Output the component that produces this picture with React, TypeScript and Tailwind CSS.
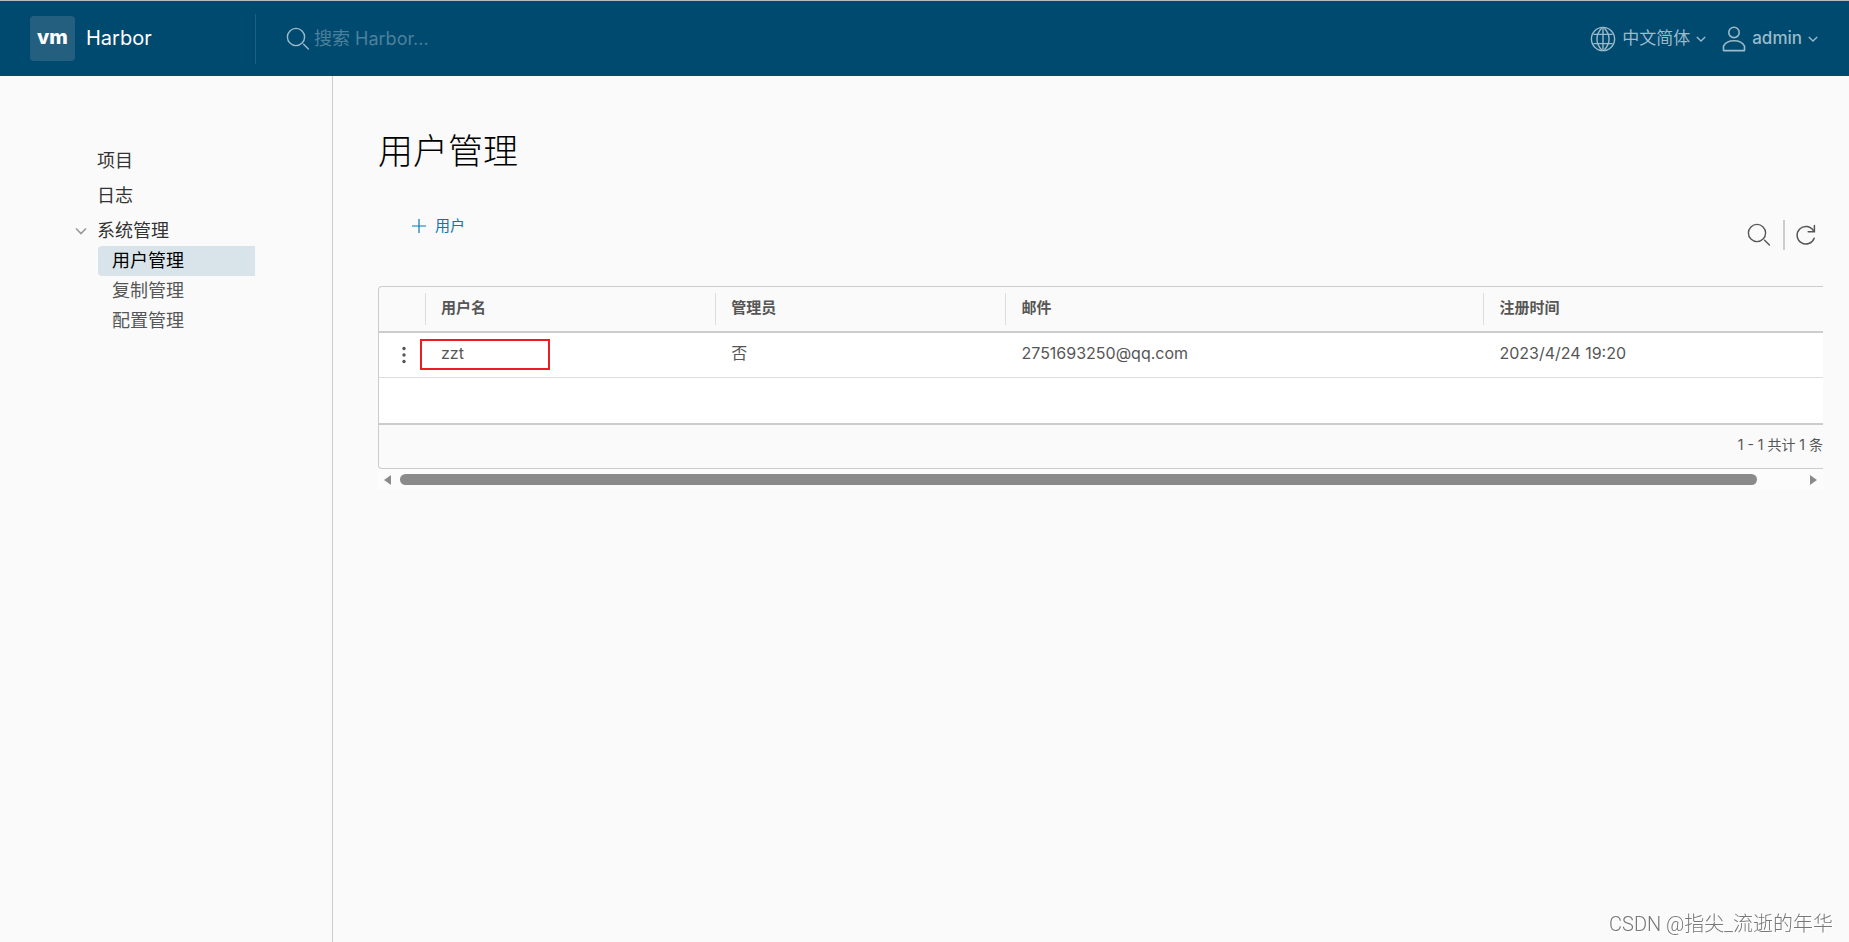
import React from "react";

interface User {
  name: string;
  admin: boolean;
  email: string;
  created: string;
}

const users: User[] = [
  { name: "zzt", admin: false, email: "2751693250@qq.com", created: "2023/4/24 19:20" },
];

const navItems = ["项目", "日志"];
const adminItems = ["用户管理", "复制管理", "配置管理"];

const columns = [
  { label: "用户名", width: "w-[20.1%]" },
  { label: "管理员", width: "w-[20.1%]" },
  { label: "邮件", width: "w-[33.1%]" },
  { label: "注册时间", width: "" },
];

function SearchIcon() {
  return (
    <svg viewBox="0 0 24 24" className="size-6 shrink-0" fill="none" stroke="currentColor" strokeWidth="1.4" strokeLinecap="round">
      <circle cx="10" cy="10" r="8.6" />
      <path d="M17.6 17.2 22.4 22" />
    </svg>
  );
}

function GlobeIcon() {
  return (
    <svg viewBox="0 0 26 26" className="size-6.5 shrink-0" fill="none" stroke="currentColor" strokeWidth="1.4">
      <circle cx="13" cy="13" r="11.6" />
      <path d="M13 1.4v23.2M3.4 8.4h19.2M3.4 17.6h19.2M11.6 2.2C5.4 8.6 5.4 17.4 11.6 23.8M14.4 2.2c6.2 6.4 6.2 15.2 0 21.6" />
    </svg>
  );
}

function UserIcon() {
  return (
    <svg viewBox="0 0 24 26" className="h-6.5 w-6 shrink-0" fill="none" stroke="currentColor" strokeWidth="1.6" strokeLinejoin="round">
      <circle cx="12" cy="6.4" r="5.2" />
      <path d="M1.5 24.6v-4.4c1.6-3.2 5.6-5.4 10.5-5.4s8.9 2.2 10.5 5.4v4.4z" />
    </svg>
  );
}

function RefreshIcon() {
  return (
    <svg viewBox="0 0 22 22" className="size-5.5" fill="none" stroke="currentColor" strokeWidth="1.5" strokeLinecap="round">
      <path d="M19.2 14.2a8.8 8.8 0 1 1-.8-7.6" />
      <path d="M19.4 1.5v6.2h-6.2" />
    </svg>
  );
}

function CaretIcon({ className }: { className: string }) {
  return (
    <svg viewBox="0 0 12 12" className={className} fill="none" stroke="currentColor" strokeWidth="1.6">
      <path d="M1 3.5 6 8.5l5-5" />
    </svg>
  );
}

function Header() {
  return (
    <header className="flex h-19 items-center border-t border-[#b5bcbd] bg-[#004a70] text-[#9bbaca]">
      <a href="#" className="flex w-[255px] items-center gap-[11px] pl-7.5 text-white">
        <span className="flex size-[45px] items-center justify-center rounded bg-[#255f80] pb-1 text-xl font-extrabold">vm</span>
        <span className="pb-0.5 text-xl">Harbor</span>
      </a>
      <label className="flex h-[50px] flex-1 items-center gap-1 border-l border-[#1e5f80] pl-7.5">
        <SearchIcon />
        <input
          type="text"
          aria-label="搜索"
          placeholder="搜索 Harbor..."
          className="w-64 bg-transparent text-lg outline-none placeholder:text-[#4c809b]"
        />
      </label>
      <div className="flex items-center gap-4 pr-[31px] text-[17px]">
        <button type="button" className="flex items-center gap-1.5">
          <GlobeIcon />
          中文简体
          <CaretIcon className="size-2.5" />
        </button>
        <button type="button" className="flex items-center gap-1.5 font-medium">
          <UserIcon />
          admin
          <CaretIcon className="size-2.5" />
        </button>
      </div>
    </header>
  );
}

function Sidebar() {
  return (
    <nav className="w-[333px] shrink-0 border-r border-[#ccc] pt-[67px] pr-[77px] pl-[75px] text-lg text-[#333]">
      {navItems.map((item) => (
        <a key={item} href="#" className="flex h-[35px] items-center pl-[22px]">
          {item}
        </a>
      ))}
      <button type="button" className="flex h-[33px] items-center gap-2.5 pt-0.5">
        <CaretIcon className="size-3 text-[#999]" />
        系统管理
      </button>
      <div className="pl-[23px]">
        {adminItems.map((item, i) => (
          <a
            key={item}
            href="#"
            className={`flex h-[30px] items-center rounded-l pl-3.5 ${i === 0 ? "bg-[#d9e4ea] text-black" : "text-[#565656]"}`}
          >
            {item}
          </a>
        ))}
      </div>
    </nav>
  );
}

function UserTable() {
  return (
    <div className="overflow-hidden rounded-l border border-r-0 border-[#ccc]">
      <table className="w-full table-fixed border-separate border-spacing-0 text-left text-[#565656]">
        <thead>
          <tr className="h-[46px]">
            <th className="w-[46px] border-b-2 border-[#ccc]" />
            {columns.map((col) => (
              <th key={col.label} className={`border-b-2 border-[#ccc] p-0 text-[15px] font-bold ${col.width}`}>
                <div className="flex h-8 items-center border-l border-[#ddd] pb-0.5 pl-[15px]">{col.label}</div>
              </th>
            ))}
          </tr>
        </thead>
        <tbody className="bg-white text-base">
          {users.map((user) => (
            <tr key={user.name} className="h-[45px]">
              <td className="border-b border-[#ddd] p-0">
                <button type="button" aria-label="操作" className="ml-[19px] flex h-6 w-3 items-center justify-center">
                  <svg viewBox="0 0 4 18" className="h-4.5 w-1" fill="currentColor">
                    <circle cx="2" cy="2.5" r="1.7" />
                    <circle cx="2" cy="9" r="1.7" />
                    <circle cx="2" cy="15.5" r="1.7" />
                  </svg>
                </button>
              </td>
              <td className="relative border-b border-[#ddd] p-0 pb-1 pl-4">
                {user.name}
                <span className="absolute top-1.5 -left-[5px] h-[31px] w-[130px] border-2 border-[#ed1c24]" />
              </td>
              <td className="border-b border-[#ddd] p-0 pb-1 pl-4">{user.admin ? "是" : "否"}</td>
              <td className="border-b border-[#ddd] p-0 pb-1 pl-4">{user.email}</td>
              <td className="border-b border-[#ddd] p-0 pb-1 pl-4">{user.created}</td>
            </tr>
          ))}
          <tr className="h-[47px]">
            <td colSpan={5} className="border-b-2 border-[#ccc]" />
          </tr>
        </tbody>
      </table>
      <div className="flex h-[43px] items-center justify-end pb-1 text-sm text-[#565656]">1 - 1 共计 1 条</div>
    </div>
  );
}

function ScrollBar() {
  return (
    <div className="flex h-[21px] items-center bg-[#fcfcfc] px-1.5 text-[#8b8b8b]">
      <svg viewBox="0 0 8 12" className="h-3 w-2" fill="currentColor">
        <path d="M7 1v10L0 6z" />
      </svg>
      <div className="flex-1 pr-13 pl-2">
        <div className="h-[11px] w-full rounded-full bg-[#8b8b8b]" />
      </div>
      <svg viewBox="0 0 8 12" className="h-3 w-2" fill="currentColor">
        <path d="M1 1v10l7-5z" />
      </svg>
    </div>
  );
}

export default function App() {
  return (
    <div className="flex min-h-screen flex-col bg-[#fafafa] font-['Inter','Noto_Sans_CJK_SC',sans-serif]">
      <Header />
      <div className="flex flex-1">
        <Sidebar />
        <main className="min-w-0 flex-1 pt-[50px] pr-[26px] pl-[45px]">
          <h1 className="text-[35px] leading-[50px] font-light text-black">用户管理</h1>
          <div className="flex justify-between py-9 pl-[33px]">
            <button type="button" className="flex h-7 items-center gap-2 text-[15px] text-[#0079b8]">
              <svg viewBox="0 0 16 16" className="size-4" fill="none" stroke="currentColor" strokeWidth="1.2">
                <path d="M8 1v14M1 8h14" />
              </svg>
              用户
            </button>
            <div className="flex items-center pt-2 pr-1.5 text-[#565656]">
              <button type="button" aria-label="搜索">
                <SearchIcon />
              </button>
              <span className="mr-2.5 ml-3 h-[30px] w-0.5 bg-[#ccc]" />
              <button type="button" aria-label="刷新">
                <RefreshIcon />
              </button>
            </div>
          </div>
          <UserTable />
          <ScrollBar />
        </main>
      </div>
      <div className="fixed right-4 bottom-1 font-['Roboto','Noto_Sans_CJK_SC',sans-serif] text-xl font-light text-[#777] [text-shadow:1px_1px_0_#fff]">
        CSDN @指尖_流逝的年华
      </div>
    </div>
  );
}
